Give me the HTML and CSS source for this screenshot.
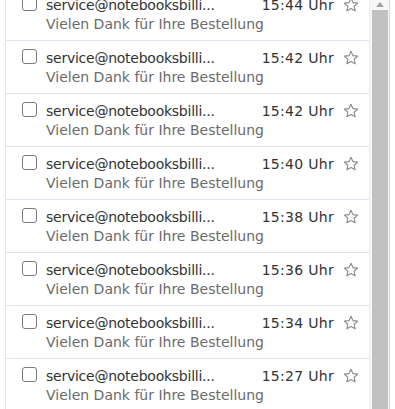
FILE: index.html
```html
<!DOCTYPE html>
<html lang="de">

<head>
    <meta charset="utf-8">
    <title>Posteingang</title>
    <link rel="stylesheet" href="styles.css">
</head>

<body>
    <div class="rahmen">
        <section class="liste">
            <ul class="mails"></ul>
        </section>
        <div class="scrollbar">
            <div class="pfeil"></div>
            <div class="daumen"></div>
        </div>
    </div>

    <template>
        <li class="mail">
            <span class="box"></span>
            <div class="inhalt">
                <div class="zeile">
                    <span class="absender"></span>
                    <span class="zeit"></span>
                    <svg class="stern" viewBox="0 0 16 16" width="16" height="16">
                        <path d="M8 1.3l1.95 4.3 4.7.5-3.5 3.15 1 4.6L8 11.5l-4.15 2.35 1-4.6L1.35 6.1l4.7-.5z" fill="none" stroke="#8a8a8a" stroke-width="1.1" stroke-linejoin="round" />
                    </svg>
                </div>
                <div class="betreff"></div>
            </div>
        </li>
    </template>

    <script>
        const zeiten = ["15:44", "15:42", "15:42", "15:40", "15:38", "15:36", "15:34", "15:27"];
        let liste = document.querySelector(".mails");
        let template = document.querySelector("template");

        zeiten.forEach(zeit => {
            let klon = template.cloneNode(true).content;
            klon.querySelector(".absender").textContent = "service@notebooksbilli...";
            klon.querySelector(".zeit").textContent = zeit + " Uhr";
            klon.querySelector(".betreff").textContent = "Vielen Dank für Ihre Bestellung";
            liste.appendChild(klon);
        });
    </script>
</body></html>
```

FILE: styles.css
```css
body {
    margin: 0;
    font-family: 'DejaVu Sans', Verdana, sans-serif;
    background-color: white;
    overflow: hidden;
}

.rahmen {
    display: flex;
    height: 409px;
    margin-left: 5px;
    width: 383px;
    border-left: 1px solid #e3e8ef;
    border-right: 1px solid #c9daf0;
    overflow: hidden;
}

.liste {
    flex: 1;
    overflow: hidden;
}

.mails {
    list-style: none;
    margin: -12px 0 0 0;
    padding: 0;
}

.mail {
    display: flex;
    height: 52px;
    border-bottom: 1px solid #dde4ee;
}

.box {
    width: 13px;
    height: 13px;
    margin: 8px 9px 0 16px;
    border: 1px solid #7a7a7a;
    border-radius: 3px;
    flex-shrink: 0;
}

.inhalt {
    flex: 1;
    padding-top: 7px;
}

.zeile {
    display: flex;
    align-items: center;
    height: 19px;
}

.absender {
    flex: 1;
    font-size: 14px;
    color: #333;
    letter-spacing: -0.25px;
}

.zeit {
    font-size: 14px;
    color: #333;
    letter-spacing: 0.3px;
}

.stern {
    margin: 0 10px 0 9px;
}

.betreff {
    font-size: 14px;
    color: #6b6b6b;
    margin-top: 2px;
}

.scrollbar {
    width: 19px;
    border-left: 1px solid #ececec;
    background-color: #f7f7f7;
    display: flex;
    flex-direction: column;
    align-items: center;
}

.pfeil {
    margin-top: 2px;
    width: 0;
    height: 0;
    border-left: 4px solid transparent;
    border-right: 4px solid transparent;
    border-bottom: 5px solid #a3a3a3;
}

.daumen {
    flex: 1;
    width: 16px;
    margin-top: 3px;
    background-color: #c1c1c1;
}
```
